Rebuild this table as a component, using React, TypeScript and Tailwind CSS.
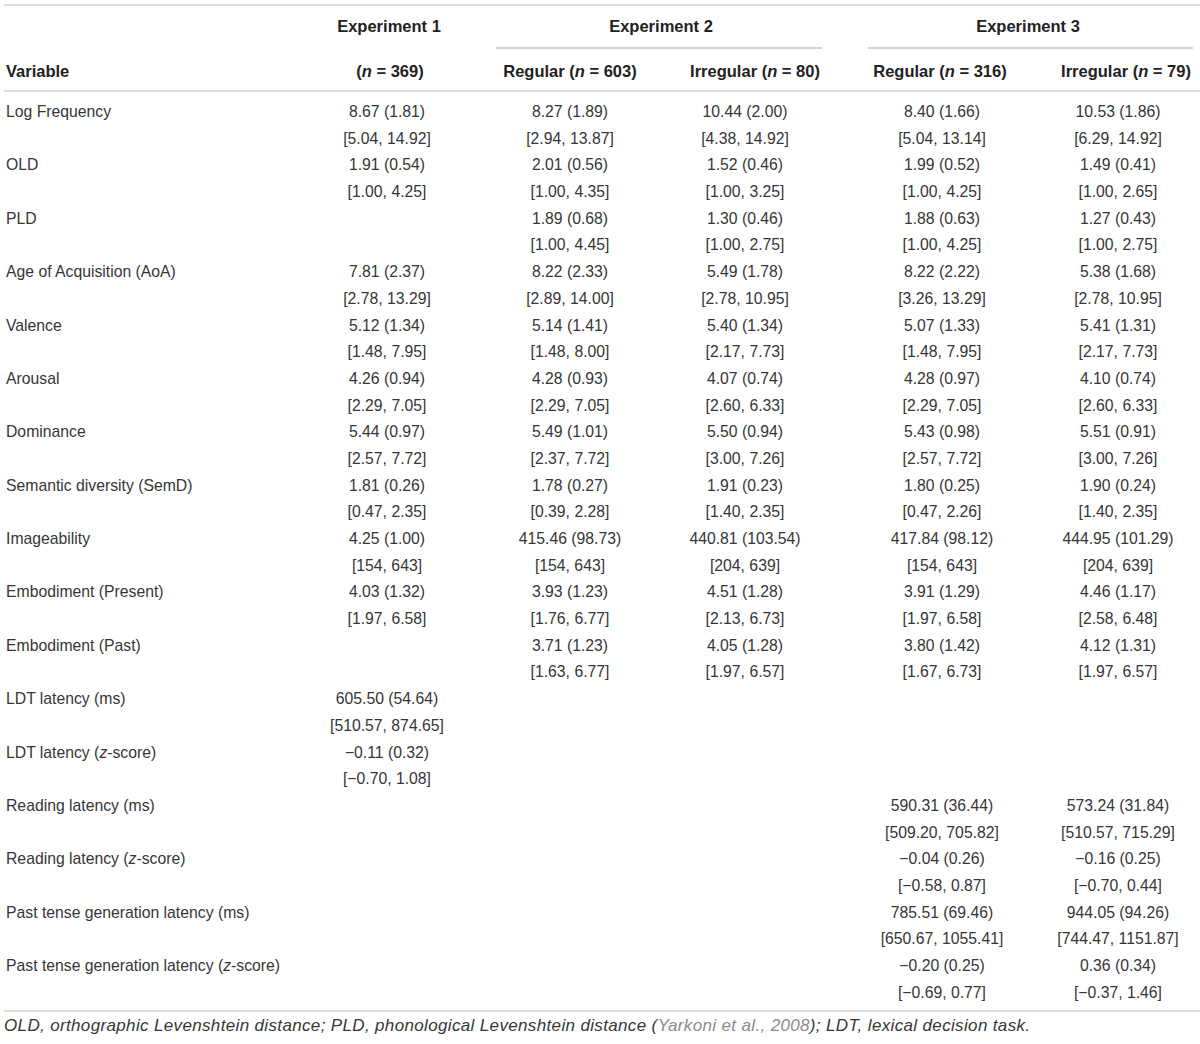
import React from 'react'

// Descriptive statistics table: mean (SD) on the first line, [min, max] on the second

type Cell = [string, string] | null

interface Row {
  label: React.ReactNode
  cells: Cell[]
}

const M = '\u2212'

const rows: Row[] = [
  {
    label: 'Log Frequency',
    cells: [
      ['8.67 (1.81)', '[5.04, 14.92]'],
      ['8.27 (1.89)', '[2.94, 13.87]'],
      ['10.44 (2.00)', '[4.38, 14.92]'],
      ['8.40 (1.66)', '[5.04, 13.14]'],
      ['10.53 (1.86)', '[6.29, 14.92]'],
    ],
  },
  {
    label: 'OLD',
    cells: [
      ['1.91 (0.54)', '[1.00, 4.25]'],
      ['2.01 (0.56)', '[1.00, 4.35]'],
      ['1.52 (0.46)', '[1.00, 3.25]'],
      ['1.99 (0.52)', '[1.00, 4.25]'],
      ['1.49 (0.41)', '[1.00, 2.65]'],
    ],
  },
  {
    label: 'PLD',
    cells: [
      null,
      ['1.89 (0.68)', '[1.00, 4.45]'],
      ['1.30 (0.46)', '[1.00, 2.75]'],
      ['1.88 (0.63)', '[1.00, 4.25]'],
      ['1.27 (0.43)', '[1.00, 2.75]'],
    ],
  },
  {
    label: 'Age of Acquisition (AoA)',
    cells: [
      ['7.81 (2.37)', '[2.78, 13.29]'],
      ['8.22 (2.33)', '[2.89, 14.00]'],
      ['5.49 (1.78)', '[2.78, 10.95]'],
      ['8.22 (2.22)', '[3.26, 13.29]'],
      ['5.38 (1.68)', '[2.78, 10.95]'],
    ],
  },
  {
    label: 'Valence',
    cells: [
      ['5.12 (1.34)', '[1.48, 7.95]'],
      ['5.14 (1.41)', '[1.48, 8.00]'],
      ['5.40 (1.34)', '[2.17, 7.73]'],
      ['5.07 (1.33)', '[1.48, 7.95]'],
      ['5.41 (1.31)', '[2.17, 7.73]'],
    ],
  },
  {
    label: 'Arousal',
    cells: [
      ['4.26 (0.94)', '[2.29, 7.05]'],
      ['4.28 (0.93)', '[2.29, 7.05]'],
      ['4.07 (0.74)', '[2.60, 6.33]'],
      ['4.28 (0.97)', '[2.29, 7.05]'],
      ['4.10 (0.74)', '[2.60, 6.33]'],
    ],
  },
  {
    label: 'Dominance',
    cells: [
      ['5.44 (0.97)', '[2.57, 7.72]'],
      ['5.49 (1.01)', '[2.37, 7.72]'],
      ['5.50 (0.94)', '[3.00, 7.26]'],
      ['5.43 (0.98)', '[2.57, 7.72]'],
      ['5.51 (0.91)', '[3.00, 7.26]'],
    ],
  },
  {
    label: 'Semantic diversity (SemD)',
    cells: [
      ['1.81 (0.26)', '[0.47, 2.35]'],
      ['1.78 (0.27)', '[0.39, 2.28]'],
      ['1.91 (0.23)', '[1.40, 2.35]'],
      ['1.80 (0.25)', '[0.47, 2.26]'],
      ['1.90 (0.24)', '[1.40, 2.35]'],
    ],
  },
  {
    label: 'Imageability',
    cells: [
      ['4.25 (1.00)', '[154, 643]'],
      ['415.46 (98.73)', '[154, 643]'],
      ['440.81 (103.54)', '[204, 639]'],
      ['417.84 (98.12)', '[154, 643]'],
      ['444.95 (101.29)', '[204, 639]'],
    ],
  },
  {
    label: 'Embodiment (Present)',
    cells: [
      ['4.03 (1.32)', '[1.97, 6.58]'],
      ['3.93 (1.23)', '[1.76, 6.77]'],
      ['4.51 (1.28)', '[2.13, 6.73]'],
      ['3.91 (1.29)', '[1.97, 6.58]'],
      ['4.46 (1.17)', '[2.58, 6.48]'],
    ],
  },
  {
    label: 'Embodiment (Past)',
    cells: [
      null,
      ['3.71 (1.23)', '[1.63, 6.77]'],
      ['4.05 (1.28)', '[1.97, 6.57]'],
      ['3.80 (1.42)', '[1.67, 6.73]'],
      ['4.12 (1.31)', '[1.97, 6.57]'],
    ],
  },
  {
    label: 'LDT latency (ms)',
    cells: [['605.50 (54.64)', '[510.57, 874.65]'], null, null, null, null],
  },
  {
    label: (
      <>
        LDT latency (<i>z</i>-score)
      </>
    ),
    cells: [[`${M}0.11 (0.32)`, `[${M}0.70, 1.08]`], null, null, null, null],
  },
  {
    label: 'Reading latency (ms)',
    cells: [
      null,
      null,
      null,
      ['590.31 (36.44)', '[509.20, 705.82]'],
      ['573.24 (31.84)', '[510.57, 715.29]'],
    ],
  },
  {
    label: (
      <>
        Reading latency (<i>z</i>-score)
      </>
    ),
    cells: [
      null,
      null,
      null,
      [`${M}0.04 (0.26)`, `[${M}0.58, 0.87]`],
      [`${M}0.16 (0.25)`, `[${M}0.70, 0.44]`],
    ],
  },
  {
    label: 'Past tense generation latency (ms)',
    cells: [
      null,
      null,
      null,
      ['785.51 (69.46)', '[650.67, 1055.41]'],
      ['944.05 (94.26)', '[744.47, 1151.87]'],
    ],
  },
  {
    label: (
      <>
        Past tense generation latency (<i>z</i>-score)
      </>
    ),
    cells: [
      null,
      null,
      null,
      [`${M}0.20 (0.25)`, `[${M}0.69, 0.77]`],
      ['0.36 (0.34)', `[${M}0.37, 1.46]`],
    ],
  },
]

// per data column: extra left padding so the centred text sits where the reference has it
const colPad = ['', '', '', 'pl-[22px]', 'pl-[8px]']

const grid = 'grid grid-cols-[286px_194px_172px_178px_194px_172px]'

function N() {
  return <i className="font-bold">n</i>
}

export default function App() {
  return (
    <div
      className="min-h-[1044px] w-[1200px] bg-white pl-1 pt-1 text-[15.75px] text-[#363636]"
      style={{ fontFamily: '"Liberation Sans", Arial, sans-serif' }}
    >
      <div className="h-[2px] bg-[#dcdcdc]" />

      {/* header */}
      <div className={`${grid} text-[16.5px] font-bold text-[#222]`}>
        <div className="h-[43px]" />
        <div className="flex h-[41px] items-center justify-center pl-[4px]">Experiment 1</div>
        <div className="col-span-2 flex h-[43px] flex-col">
          <div className="flex flex-1 items-center justify-center pl-[4px]">Experiment 2</div>
          <div className="ml-3 mr-3 h-[2px] bg-[#d4d4d4]" />
        </div>
        <div className="col-span-2 flex h-[43px] flex-col pl-[22px]">
          <div className="flex flex-1 items-center justify-center">Experiment 3</div>
          <div className="ml-3 mr-[7px] h-[2px] bg-[#d4d4d4]" />
        </div>

        <div className="flex h-[41px] items-center pl-[2px] pt-[4px]">Variable</div>
        <div className="flex h-[41px] items-center justify-center pl-[6px] pt-[4px]">
          (<N />&nbsp;= 369)
        </div>
        <div className="flex h-[41px] items-center justify-center pt-[4px]">
          Regular (<N />&nbsp;= 603)
        </div>
        <div className="flex h-[41px] items-center justify-center pl-[20px] pt-[4px]">
          Irregular (<N />&nbsp;= 80)
        </div>
        <div className="flex h-[41px] items-center justify-center pl-[18px] pt-[4px]">
          Regular (<N />&nbsp;= 316)
        </div>
        <div className="flex h-[41px] items-center justify-center pl-[24px] pt-[4px]">
          Irregular (<N />&nbsp;= 79)
        </div>
      </div>

      <div className="h-[2px] bg-[#dcdcdc]" />

      {/* body */}
      <div className="pb-[4px] pt-[7px]">
        {rows.map((row, i) => (
          <div key={i} className={`${grid} leading-[26.69px]`}>
            <div className="pl-[2px]">
              <div>{row.label}</div>
              <div>&nbsp;</div>
            </div>
            {row.cells.map((c, j) => (
              <div key={j} className={`text-center ${colPad[j]}`}>
                <div>{c ? c[0] : '\u00a0'}</div>
                <div>{c ? c[1] : '\u00a0'}</div>
              </div>
            ))}
          </div>
        ))}
      </div>

      <div className="h-[2px] bg-[#dcdcdc]" />

      <p className="pt-[4px] text-[17px] italic leading-[20px] tracking-[0.35px] text-[#363636]">
        OLD, orthographic Levenshtein distance; PLD, phonological Levenshtein distance (
        <span className="text-[#8a8a8a]">Yarkoni et al., 2008</span>); LDT, lexical decision task.
      </p>
    </div>
  )
}
